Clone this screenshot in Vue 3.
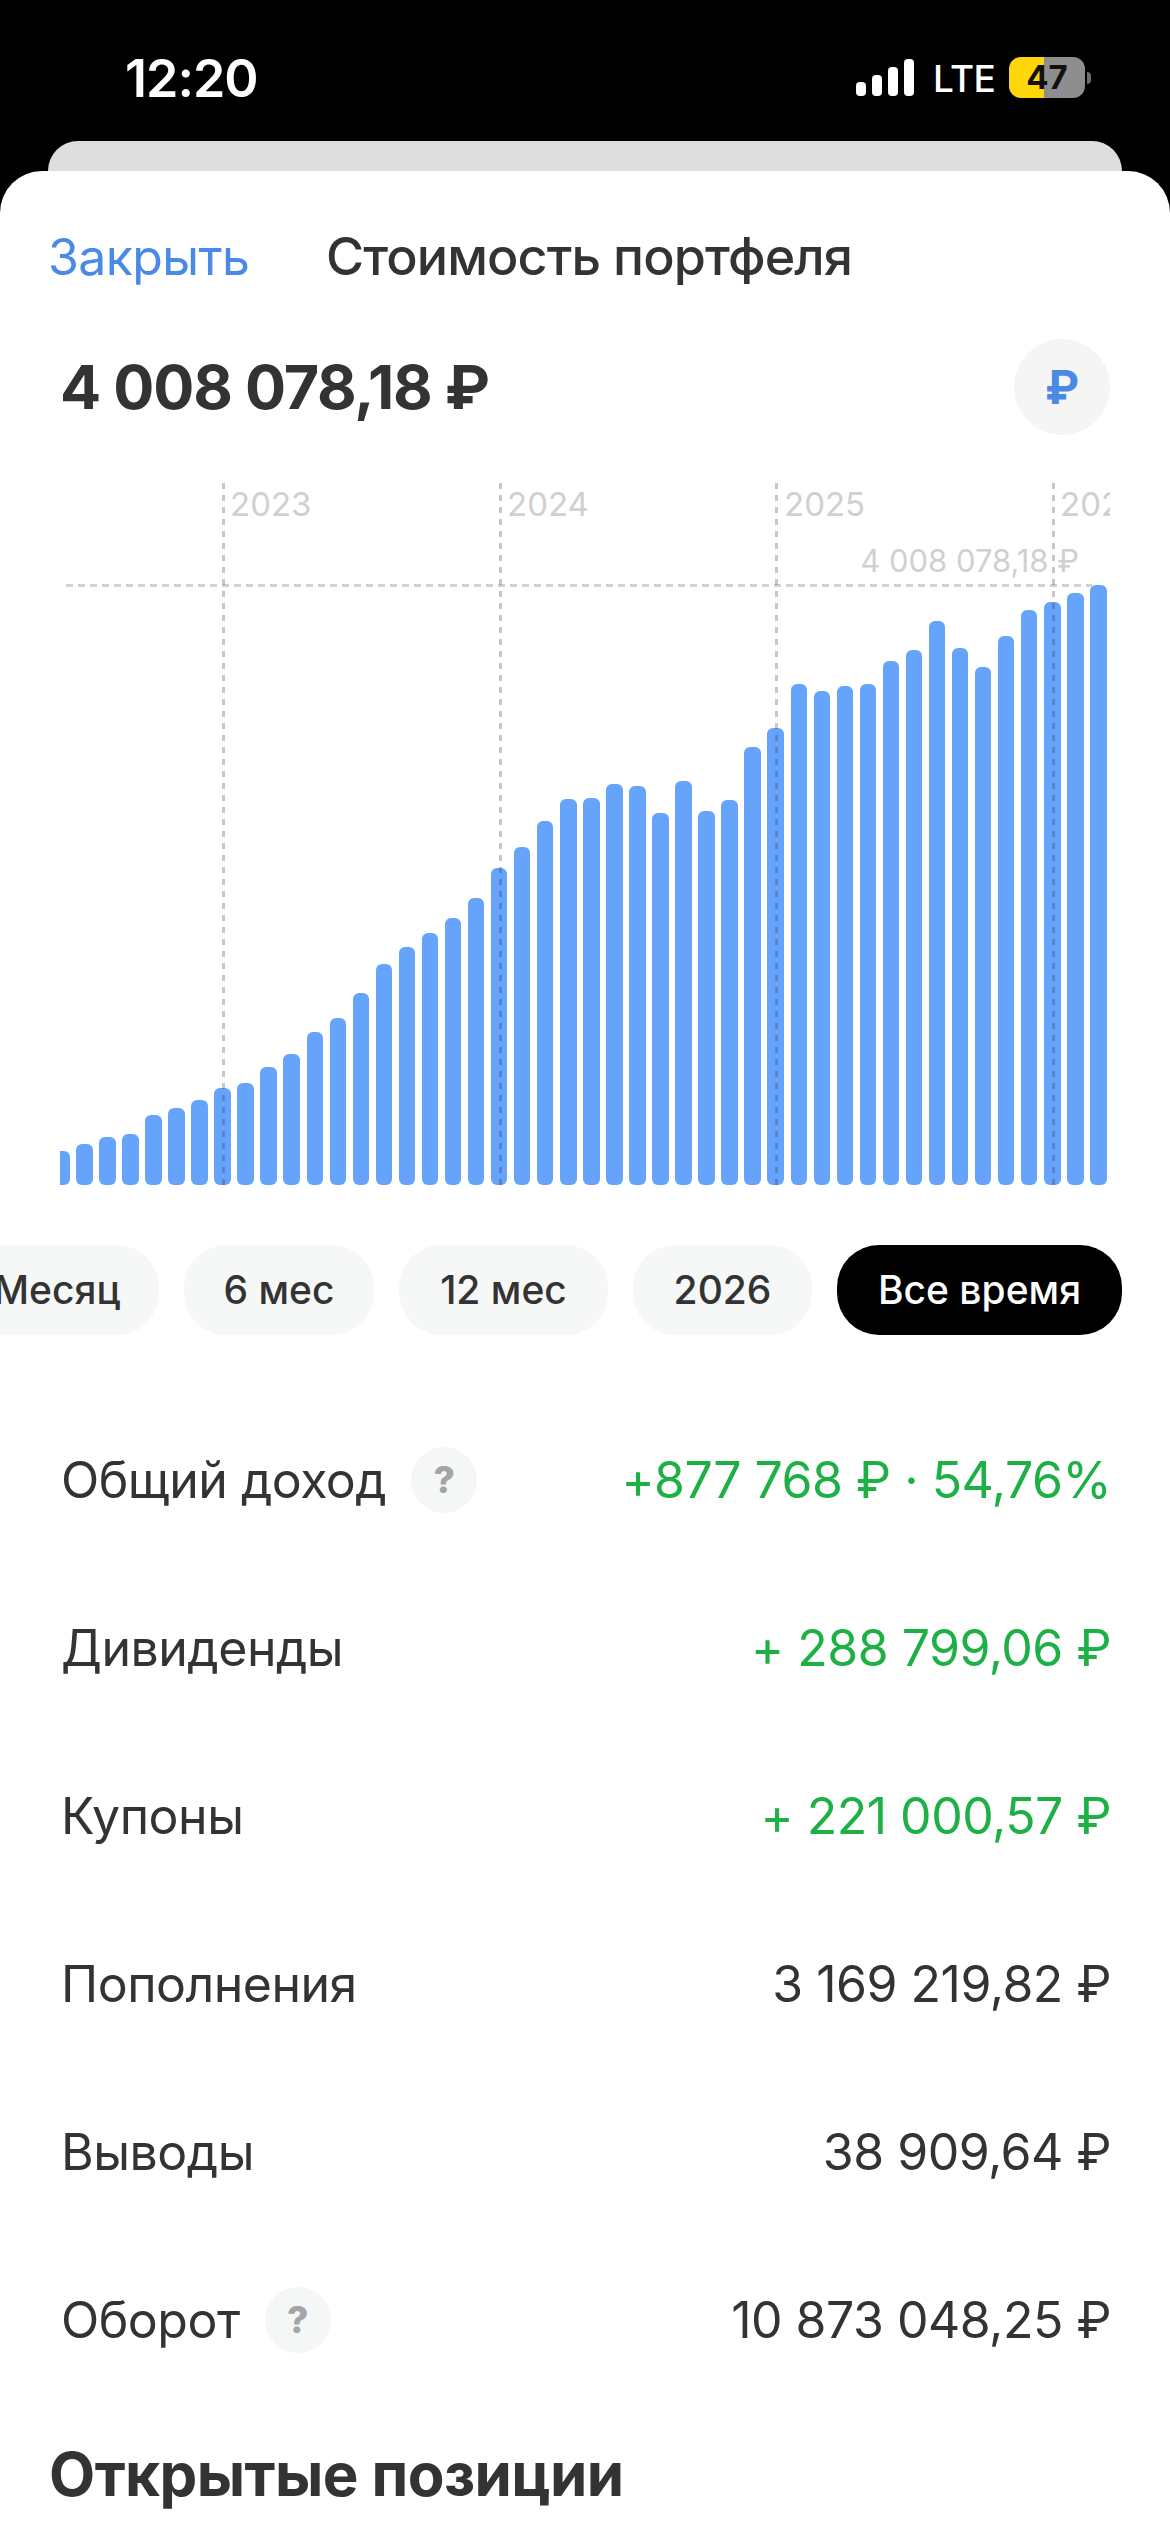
<script setup>
const tops = [1443,1428,1414,1407,1366,1352,1334,1310,1298,1265,1237,1191,1160,1108,1047,1011,980,949,906,843,799,744,697,695,
  666,670,727,658,723,699,586,546,453,468,458,453,405,381,320,377,417,352,297,280,261,244]
const bars = tops.map(t => ((1515 - t) / 2.119).toFixed(1))
const lines = [162, 439, 715, 992]
const years = [{ label: '2023', x: 170 }, { label: '2024', x: 447 }, { label: '2025', x: 724 }, { label: '2026', x: 1000 }]
const pills = [
  { label: 'Месяц', w: 204 },
  { label: '6 мес', w: 190 },
  { label: '12 мес', w: 209 },
  { label: '2026', w: 179 },
  { label: 'Все время', w: 285, active: true }
]
const rows = [
  { label: 'Общий доход', help: true, value: '+877 768 ₽ · 54,76%', green: true },
  { label: 'Дивиденды', value: '+ 288 799,06 ₽', green: true },
  { label: 'Купоны', value: '+ 221 000,57 ₽', green: true },
  { label: 'Пополнения', value: '3 169 219,82 ₽' },
  { label: 'Выводы', value: '38 909,64 ₽' },
  { label: 'Оборот', help: true, value: '10 873 048,25 ₽' }
]
</script>

<template>
  <div class="screen">
    <header class="status">
      <span class="time">12:20</span>
      <div class="status-right">
        <svg class="signal" width="58" height="37" viewBox="0 0 58 37" fill="#fff">
          <rect x="0" y="23" width="10" height="14" rx="4" />
          <rect x="16" y="16" width="10" height="21" rx="4" />
          <rect x="32" y="8" width="10" height="29" rx="4" />
          <rect x="48" y="0" width="10" height="37" rx="4" />
        </svg>
        <span class="lte">LTE</span>
        <div class="battery">
          <span class="battery-body">47</span>
          <span class="battery-nub"></span>
        </div>
      </div>
    </header>

    <div class="back-card"></div>

    <main class="sheet">
      <nav class="nav">
        <span class="close">Закрыть</span>
        <span class="title">Стоимость портфеля</span>
      </nav>

      <section class="total">
        <span class="amount">4 008 078,18 ₽</span>
        <span class="currency">₽</span>
      </section>

      <section class="chart">
        <div class="bars">
          <div v-for="(h, i) in bars" :key="i" class="bar" :style="{ height: h + 'px' }"></div>
        </div>
        <div class="hline"></div>
        <div v-for="x in lines" :key="x" class="vline" :style="{ left: x + 'px' }"></div>
        <span v-for="y in years" :key="y.label" class="year" :style="{ left: y.x + 'px' }">{{ y.label }}</span>
        <span class="max">4 008 078,18 ₽</span>
      </section>

      <div class="pills">
        <span
          v-for="p in pills"
          :key="p.label"
          class="pill"
          :class="{ active: p.active }"
          :style="{ width: p.w + 'px' }"
        >{{ p.label }}</span>
      </div>

      <section class="rows">
        <div v-for="r in rows" :key="r.label" class="row">
          <div class="row-label">
            <span>{{ r.label }}</span>
            <span v-if="r.help" class="help">?</span>
          </div>
          <span class="row-value" :class="{ green: r.green }">{{ r.value }}</span>
        </div>
      </section>

      <h2 class="heading">Открытые позиции</h2>
    </main>
  </div>
</template>

<style>
html, body { margin: 0; background: #000; }
</style>

<style scoped>
.screen {
  width: 1170px;
  height: 2532px;
  overflow: hidden;
  background: #000;
  font-family: Inter, "Noto Sans", sans-serif;
  color: #333;
}
.status {
  height: 141px;
  box-sizing: border-box;
  display: flex;
  justify-content: space-between;
  padding: 56px 79px 0 125px;
  color: #fff;
}
.time {
  font-size: 52px;
  font-weight: 600;
  line-height: 46px;
  letter-spacing: -1px;
}
.status-right {
  display: flex;
  align-items: flex-start;
}
.signal { margin-top: 3px; }
.lte {
  margin-left: 19px;
  width: 58px;
  font-size: 37px;
  font-weight: 500;
  line-height: 46px;
  letter-spacing: -0.5px;
  white-space: nowrap;
}
.battery {
  margin-left: 18px;
  display: flex;
  align-items: center;
  height: 41px;
  margin-top: 1px;
}
.battery-body {
  width: 76px;
  height: 41px;
  border-radius: 12px;
  background: linear-gradient(90deg, #ffd60a 0 35px, #8e8e8e 35px);
  color: #111;
  font-size: 33px;
  font-weight: 700;
  line-height: 41px;
  text-align: center;
}
.battery-nub {
  width: 4px;
  height: 12px;
  margin-left: 2px;
  border-radius: 0 4px 4px 0;
  background: #6e6e6e;
}
.back-card {
  height: 60px;
  margin: 0 48px -30px;
  border-radius: 30px 30px 0 0;
  background: #dedede;
}
.sheet {
  position: relative;
  height: 2361px;
  box-sizing: border-box;
  padding-top: 50px;
  border-radius: 42px 42px 0 0;
  background: #fff;
}
.nav {
  display: flex;
  align-items: center;
  height: 72px;
  padding-left: 48px;
  line-height: 72px;
}
.close {
  width: 278px;
  font-size: 50px;
  color: #4a8ae6;
  letter-spacing: -0.6px;
}
.title {
  font-size: 52px;
  font-weight: 500;
  letter-spacing: -0.9px;
  color: #333;
}
.total {
  display: flex;
  align-items: center;
  justify-content: space-between;
  height: 96px;
  margin-top: 46px;
  padding: 0 60px 0 60px;
}
.amount {
  font-size: 61px;
  font-weight: 700;
  letter-spacing: -1.2px;
  color: #333;
}
.currency {
  width: 96px;
  height: 96px;
  border-radius: 50%;
  background: #f5f5f5;
  color: #4a8ae6;
  font-size: 46px;
  font-weight: 700;
  line-height: 96px;
  text-align: center;
}
.chart {
  position: relative;
  height: 702px;
  margin: 48px 60px 0;
  overflow: hidden;
}
.bars {
  position: absolute;
  left: -7px;
  right: -10px;
  bottom: 0;
  display: flex;
  align-items: flex-end;
  gap: 6.56px;
}
.bar {
  flex: 0 0 16.5px;
  border-radius: 6px;
  background: #66a3fb;
}
.hline {
  position: absolute;
  top: 101px;
  left: 6px;
  right: 18px;
  height: 3px;
  background: repeating-linear-gradient(90deg, #d2d2d2 0 7px, transparent 7px 12px);
}
.vline {
  position: absolute;
  top: 0;
  bottom: 0;
  width: 3px;
  background: repeating-linear-gradient(180deg, rgba(50, 50, 80, 0.28) 0 6px, transparent 6px 12px);
}
.year, .max {
  position: absolute;
  color: #d0d0d0;
  white-space: nowrap;
}
.year {
  top: 2px;
  font-size: 33px;
  line-height: 38px;
}
.max {
  top: 60px;
  right: 31px;
  font-size: 31px;
  line-height: 36px;
}
.pills {
  display: flex;
  justify-content: flex-end;
  gap: 25px;
  margin-top: 60px;
  padding-right: 48px;
  overflow: hidden;
}
.pill {
  flex: none;
  height: 90px;
  border-radius: 42px;
  background: #f6f7f7;
  color: #333;
  font-size: 39px;
  font-weight: 500;
  line-height: 90px;
  text-align: center;
}
.pill.active {
  background: #000;
  color: #fff;
}
.rows { margin-top: 61px; }
.row {
  display: flex;
  align-items: center;
  justify-content: space-between;
  height: 168px;
  padding: 0 59px 0 61px;
  font-size: 50px;
  color: #333;
}
.row-label {
  display: flex;
  align-items: center;
  gap: 25px;
  letter-spacing: -0.5px;
}
.row-value { letter-spacing: -0.5px; white-space: nowrap; }
.green { color: #1db045; }
.help {
  width: 66px;
  height: 66px;
  border-radius: 50%;
  background: #f5f7f7;
  color: #a2a6ab;
  font-size: 37px;
  font-weight: 800;
  line-height: 66px;
  text-align: center;
  letter-spacing: 0;
}
.heading {
  height: 70px;
  margin: 35px 0 0 49px;
  font-size: 60px;
  font-weight: 700;
  line-height: 70px;
  letter-spacing: -0.6px;
  color: #333;
}
</style>
